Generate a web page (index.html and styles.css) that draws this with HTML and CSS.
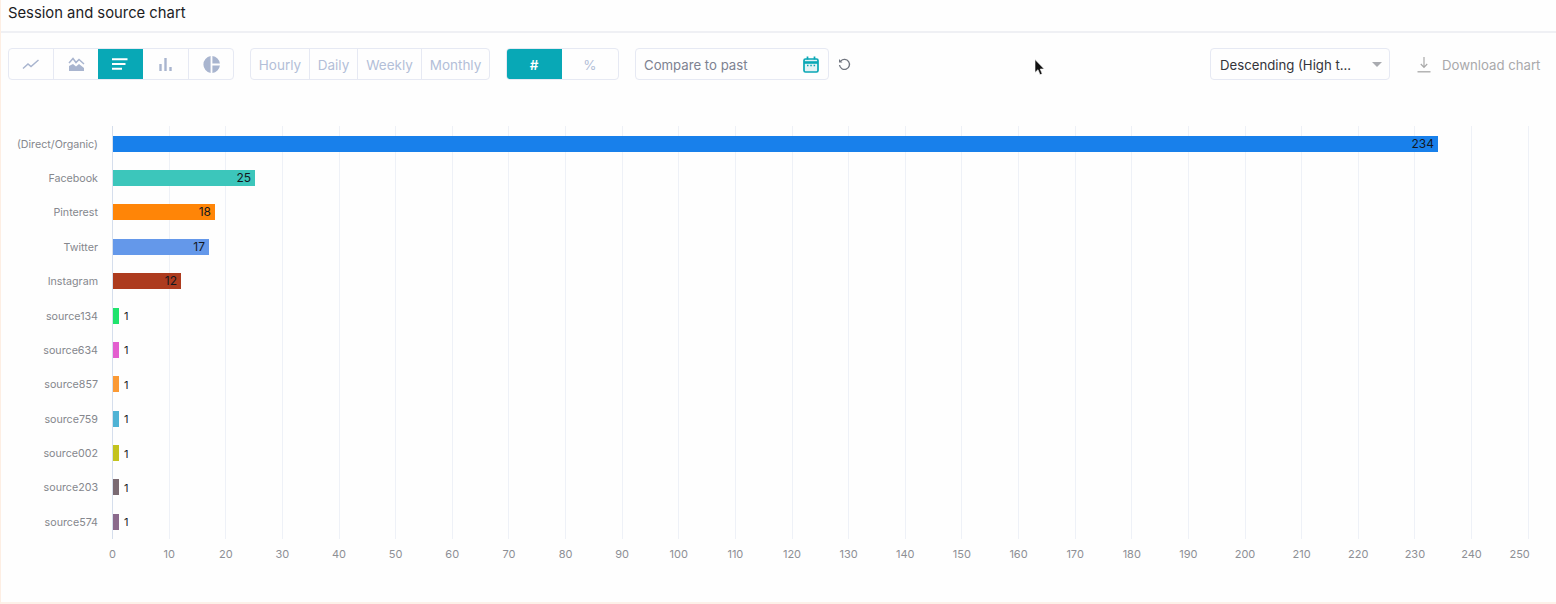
FILE: index.html
```html
<!DOCTYPE html>
<html lang="en">
<head>
<meta charset="utf-8">
<title>Session and source chart</title>
<link rel="stylesheet" href="styles.css">
</head>
<body>
<main class="panel">
  <h1 class="title">Session and source chart</h1>
  <div class="toolbar">
    <div class="group types">
      <button class="seg"><svg width="18" height="12" viewBox="0 0 18 12"><path d="M1 10.500 6 6l3 2.500L16.500 2" fill="none" stroke="#a9b5cf" stroke-width="1.500"/></svg></button>
      <button class="seg"><svg width="17" height="15" viewBox="0 0 17 15"><path d="M1 14V9l4-2 3 2.500 3-2.500 5 4v3z" fill="#a9b5cf"/><path d="M1 6l4-4.500 3 4 3-3L16 7" fill="none" stroke="#a9b5cf" stroke-width="1.500"/></svg></button>
      <button class="seg on"><svg width="16" height="12" viewBox="0 0 16 12"><path d="M0 1.200h15.500M0 6h13.500M0 10.800h10" stroke="#fff" stroke-width="1.900"/></svg></button>
      <button class="seg"><svg width="13" height="13" viewBox="0 0 13 13"><path d="M1.500 13V6M6.500 13V0M11.500 13V9" stroke="#a9b5cf" stroke-width="2.400"/></svg></button>
      <button class="seg"><svg width="17" height="17" viewBox="0 0 17 17"><path d="M7.600 0.100v16.800A8.500 8.500 0 0 1 7.600 0.100zM9.400 0.100A8.500 8.500 0 0 1 16.900 7.600H9.400zM9.400 9.400h7.500A8.500 8.500 0 0 1 9.400 16.900z" fill="#a9b5cf"/></svg></button>
    </div>
    <div class="group times">
      <button class="seg t1">Hourly</button>
      <button class="seg t2">Daily</button>
      <button class="seg t3">Weekly</button>
      <button class="seg t4">Monthly</button>
    </div>
    <div class="group modes">
      <button class="seg m1 on">#</button>
      <button class="seg m2">%</button>
    </div>
    <div class="compare">
      <span class="txt">Compare to past</span>
      <svg width="16" height="17" viewBox="0 0 16 17"><rect x="1" y="3" width="14" height="13" rx="1.500" fill="#e4f3f5" stroke="#0aa7b5" stroke-width="1.700"/><path d="M1 6.500h14" stroke="#0aa7b5" stroke-width="2.600"/><path d="M4.500 0.500v3M11.500 0.500v3" stroke="#0aa7b5" stroke-width="1.700"/><path d="M4 9.500h1.500M7.300 9.500h1.500M10.600 9.500h1.500" stroke="#0aa7b5" stroke-width="1.300"/></svg>
    </div>
    <svg class="reset" width="13" height="13" viewBox="0 0 12 12"><path d="M2.600 2.800A4.600 4.600 0 1 1 1.400 6.500" fill="none" stroke="#70757f" stroke-width="1.200"/><path d="M0.900 1v3.200h3.200z" fill="#70757f"/></svg>
    <div class="select">
      <span class="txt">Descending (High t...</span>
      <i class="caret"></i>
    </div>
    <div class="download">
      <svg width="14" height="17" viewBox="0 0 14 17"><path d="M7 1v10M3.800 8 7 11.300 10.200 8" fill="none" stroke="#a8a8a8" stroke-width="1.200"/><path d="M0.500 15.800h13" stroke="#a8a8a8" stroke-width="1.300"/></svg>
      <span class="txt">Download chart</span>
    </div>
  </div>

  <section class="chart">
    <div class="row"><span class="name">(Direct/Organic)</span><div class="bar in" style="width:1325px;background:#1880eb">234</div></div>
    <div class="row"><span class="name">Facebook</span><div class="bar in" style="width:142px;background:#3cc6bb">25</div></div>
    <div class="row"><span class="name">Pinterest</span><div class="bar in" style="width:102px;background:#ff8507">18</div></div>
    <div class="row"><span class="name">Twitter</span><div class="bar in" style="width:96px;background:#6498ea">17</div></div>
    <div class="row"><span class="name">Instagram</span><div class="bar in" style="width:68px;background:#ad3b1e">12</div></div>
    <div class="row"><span class="name">source134</span><div class="bar" style="width:6px;background:#1fe36d"></div><b>1</b></div>
    <div class="row"><span class="name">source634</span><div class="bar" style="width:6px;background:#e35fcf"></div><b>1</b></div>
    <div class="row"><span class="name">source857</span><div class="bar" style="width:6px;background:#fb9a35"></div><b>1</b></div>
    <div class="row"><span class="name">source759</span><div class="bar" style="width:6px;background:#4fb3d5"></div><b>1</b></div>
    <div class="row"><span class="name">source002</span><div class="bar" style="width:6px;background:#c3c31f"></div><b>1</b></div>
    <div class="row"><span class="name">source203</span><div class="bar" style="width:6px;background:#7a6a72"></div><b>1</b></div>
    <div class="row"><span class="name">source574</span><div class="bar" style="width:6px;background:#8b6a8c"></div><b>1</b></div>
  </section>
  <div class="axis">
    <span>0</span><span>10</span><span>20</span><span>30</span><span>40</span><span>50</span><span>60</span><span>70</span><span>80</span><span>90</span><span>100</span><span>110</span><span>120</span><span>130</span><span>140</span><span>150</span><span>160</span><span>170</span><span>180</span><span>190</span><span>200</span><span>210</span><span>220</span><span>230</span><span>240</span><span class="end">250</span>
  </div>
</main>
<svg class="pointer" width="12" height="18" viewBox="0 0 12 18"><path d="M1 0.500v13l3-2.800 2 5 2.200-0.900-2-4.800h4z" fill="#111" stroke="#fff" stroke-width="0.600"/></svg>
</body>
</html>
```
FILE: styles.css
```css
* { box-sizing: border-box; }
html, body { margin: 0; height: 604px; overflow: hidden; background: #fefefe; }
body { font-family: "Inter", "Liberation Sans", sans-serif; position: relative; }
.panel {
  width: 1556px; height: 604px;
  border-left: 1px solid #fdeee3;
  border-bottom: 2px solid #fdf1e9;
}
.title {
  margin: 0; height: 33px; padding: 4px 0 0 7px;
  font-size: 14.800px; font-weight: 400; line-height: 18px; color: #1c1c1f;
  border-bottom: 2px solid #eff0f4;
}
.toolbar { display: flex; align-items: center; height: 32px; margin-top: 15px; padding-left: 7px; }
.group { display: flex; height: 32px; border: 1px solid #e6e9f3; border-radius: 4px; overflow: hidden; background: #fefefe; }
.seg {
  display: flex; align-items: center; justify-content: center;
  padding: 0; margin: 0; border: 0; border-right: 1px solid #e6e9f3; background: none;
  font: 400 13.500px "Inter", "Liberation Sans", sans-serif; color: #b3bfd8; height: 100%;
}
.times .seg, .modes .seg { padding-top: 1px; }
.txt { padding-top: 1px; }
.seg:last-child { border-right: 0; }
.seg.on { background: #08a8b6; color: #fff; border-right-color: #08a8b6; }
.types { width: 226px; }
.types .seg { width: 45px; }
.types .seg:nth-child(3) { margin-left: -1px; }
.types .seg:nth-child(4) { width: 46px; }
.types .seg:last-child { width: 44px; }
.times { width: 240px; margin-left: 16px; }
.t1 { width: 59px; } .t2 { width: 48px; } .t3 { width: 64px; } .t4 { width: 67px; }
.modes { width: 113px; margin-left: 16px; }
.m1 { width: 55px; font-weight: 600; } .m2 { width: 56px; }
.compare {
  display: flex; align-items: center; justify-content: space-between;
  width: 194px; height: 32px; margin-left: 16px; padding: 0 9px 0 8px;
  border: 1px solid #e6e9f3; border-radius: 4px;
  font-size: 13.200px; color: #7d8291;
}
.reset { margin-left: 9px; }
.select {
  display: flex; align-items: center; justify-content: space-between;
  width: 180px; height: 32px; margin-left: 359px; padding: 0 7px 0 9px;
  border: 1px solid #e6e9f3; border-radius: 4px;
  font-size: 13.200px; color: #33343a;
}
.caret { width: 0; height: 0; border: 5px solid transparent; border-top: 5px solid #a9abb0; border-bottom: 0; }
.download { display: flex; align-items: center; gap: 11px; margin-left: 27px; font-size: 13.200px; color: #a9a9ab; }
.chart {
  width: 1530px; height: 413px; margin-top: 46.400px; padding-left: 111px;
  background-image:
    linear-gradient(#d5deec, #d5deec),
    repeating-linear-gradient(to right, #eef1f7 0 1px, transparent 1px 56.630px);
  background-position: 111px 0, 111px 0;
  background-size: 1px 100%, 1417px 100%;
  background-repeat: no-repeat;
  display: grid; grid-auto-rows: 34.400px;
}
.row { display: flex; align-items: center; margin-left: 1px; height: 34.400px; }
.name {
  width: 111px; margin-left: -112px; margin-right: 1px; padding: 1px 14px 0 0; text-align: right;
  font-size: 10.700px; color: #85878d; flex: none;
}
.bar { height: 16px; flex: none; font-size: 12px; line-height: 16px; color: #14181f; }
.bar.in { text-align: right; padding-right: 4px; }
.row b { padding-top: 1px; font-size: 11px; font-weight: 400; color: #202125; margin-left: 5px; }
.axis { display: flex; margin: 7.500px 0 0 83.200px; font-size: 11px; line-height: 14px; color: #8d8f95; }
.axis span { width: 56.630px; flex: none; text-align: center; }
.axis .end { width: 30px; text-align: right; }
.pointer { position: absolute; left: 1034px; top: 59px; }
```
